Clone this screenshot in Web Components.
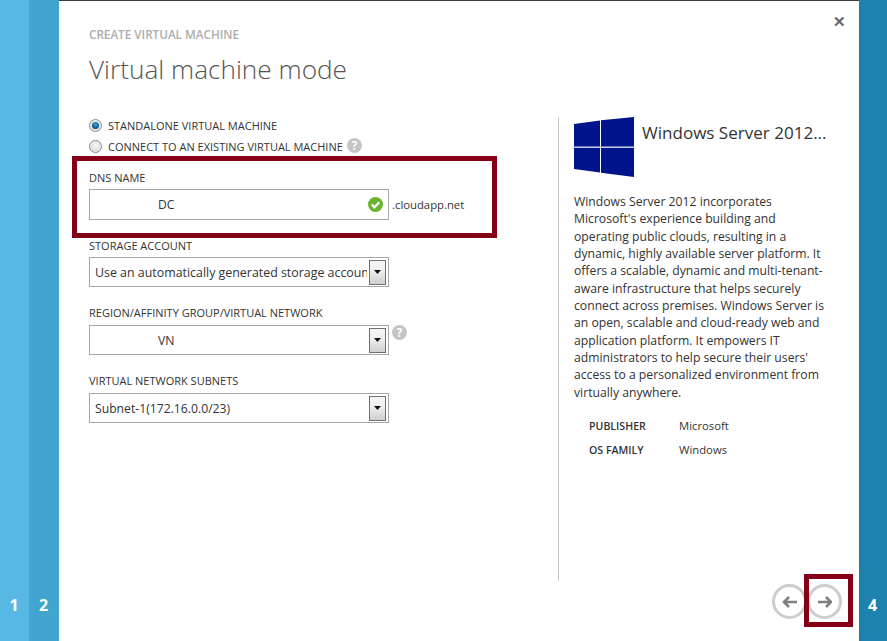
<!DOCTYPE html>
<html>
<head>
<meta charset="utf-8">
<title>Virtual machine mode</title>
<style>
  html, body { margin: 0; height: 100%; background: #fff; }
  body { font-family: "Open Sans", "Noto Sans", sans-serif; overflow: hidden; }
</style>
</head>
<body>
<wizard-shell>
  <step-rail slot="left" step="1" color="#57b8e3" width="29"></step-rail>
  <step-rail slot="left" step="2" color="#42a5d0" width="30"></step-rail>
  <step-rail slot="right" step="4" color="#1e82af" width="28"></step-rail>

  <vm-form slot="form"></vm-form>
  <image-details slot="details"></image-details>
  <wizard-nav slot="nav"></wizard-nav>
</wizard-shell>

<script>
const caps = "font-size:11px;color:#333;line-height:16px;white-space:nowrap;";
const HELP = `<svg width="15" height="15" viewBox="0 0 15 15"><circle cx="7.5" cy="7.5" r="7.5" fill="#c4c4c4"/><text x="7.5" y="11.6" text-anchor="middle" font-family="Open Sans, sans-serif" font-size="11.5" font-weight="700" fill="#fff">?</text></svg>`;

class wizardShell extends HTMLElement {
  constructor() {
    super();
    this.attachShadow({ mode: "open" });
    this.shadowRoot.innerHTML = `
    <style>
      :host { display:flex; width:887px; height:641px; position:relative; }
      .panel { flex:1; display:flex; flex-direction:column; border-top:1px solid #3a3f42; box-sizing:border-box; position:relative; }
      .head { padding:25px 0 0 30px; }
      .eyebrow { font-size:11.7px; font-weight:600; color:#adadad; line-height:16px; }
      h1 { margin:0; padding:5px 0 2px; font-size:26.2px; font-weight:300; color:#555; line-height:44px; font-family:"Open Sans","Noto Sans",sans-serif; }
      .close { position:absolute; top:12px; right:13px; font-size:15px; font-weight:700; line-height:16px; color:#666; }
      .body { display:flex; padding-top:19px; padding-left:30px; height:465px; box-sizing:border-box; }
      .form-col { width:469px; flex:none; }
      .nav { flex:1; }
      .mark { position:absolute; border:5px solid #850016; box-sizing:border-box; pointer-events:none; }
      .mark.dns { left:13px; top:155px; width:425px; height:82px; }
      .mark.next { left:745px; top:573px; width:49px; height:53px; }
    </style>
    <slot name="left"></slot>
    <main class="panel">
      <div class="close">&#10005;</div>
      <header class="head">
        <div class="eyebrow">CREATE VIRTUAL MACHINE</div>
        <h1>Virtual machine mode</h1>
      </header>
      <section class="body">
        <div class="form-col"><slot name="form"></slot></div>
        <slot name="details"></slot>
      </section>
      <div class="nav"><slot name="nav"></slot></div>
      <div class="mark dns"></div>
      <div class="mark next"></div>
    </main>
    <slot name="right"></slot>
    `;
  }
}

class stepRail extends HTMLElement {
  constructor() {
    super();
    this.attachShadow({ mode: "open" });
    const color = this.getAttribute("color");
    const width = this.getAttribute("width");
    this.shadowRoot.innerHTML = `
    <style>
      :host { display:flex; flex:none; height:100%; width:${width}px; box-sizing:border-box; padding-right:1px; background:${color}; align-items:flex-end; justify-content:center; }
      span { color:#fff; font-size:16px; font-weight:700; line-height:20px; margin-bottom:26px; }
    </style>
    <span>${this.getAttribute("step")}</span>
    `;
  }
}

class radioRow extends HTMLElement {
  constructor() {
    super();
    this.attachShadow({ mode: "open" });
    const on = this.hasAttribute("checked");
    this.shadowRoot.innerHTML = `
    <style>
      :host { display:flex; align-items:center; height:21px; gap:6px; ${caps} }
      .dot { width:13px; height:13px; border-radius:50%; box-sizing:border-box; flex:none; border:1px solid #8a8a8a;
        background:radial-gradient(circle at 50% 40%, #f8f8f8 0, #e4e4e4 50%, #c8c8c8 100%); display:flex; align-items:center; justify-content:center; box-shadow:inset 0 0 0 1px #eee; }
      .dot i { width:7px; height:7px; border-radius:50%; background:radial-gradient(circle at 50% 35%, #4ba3d8 0, #0d5f96 60%, #0a3f68 100%); }
      .help { display:flex; margin-left:-2px; margin-top:-2px; }
    </style>
    <div class="dot">${on ? "<i></i>" : ""}</div>
    <slot></slot>
    ${this.hasAttribute("help") ? `<div class="help">${HELP}</div>` : ""}
    `;
  }
}

class fieldBox extends HTMLElement {
  constructor() {
    super();
    this.attachShadow({ mode: "open" });
    const mode = this.getAttribute("mode") || "select";
    const arrow = `<div class="btn"><svg width="7" height="4" viewBox="0 0 7 4"><path d="M0 0h7L3.5 4z" fill="#111"/></svg></div>`;
    const check = `<svg class="ok" width="15" height="15" viewBox="0 0 15 15"><circle cx="7.5" cy="7.5" r="7.5" fill="#6ab42d"/><path d="M3.8 7.6l2.6 2.7 4.8-5" fill="none" stroke="#fff" stroke-width="2.2"/></svg>`;
    this.shadowRoot.innerHTML = `
    <style>
      :host { display:flex; align-items:center; }
      .box { width:300px; height:${mode === "input" ? 31 : 30}px; box-sizing:border-box; border:1px solid #a6a6a6; display:flex; align-items:center; background:#fff; position:relative; }
      .txt { flex:1; min-width:0; overflow:hidden; white-space:nowrap; font-size:var(--txt-size, 12.2px); color:#333; padding-left:5px; }
      .txt.blank { padding-left:68px; }
      .btn { flex:none; width:15px; height:23px; margin:0 2px 0 2px; border:1px solid #707070; background:linear-gradient(#f6f6f6 0, #f0f0f0 40%, #cfcfcf 100%); display:flex; align-items:flex-start; justify-content:center; }
      .btn svg { margin-top:9px; }
      .ok { flex:none; margin-right:5px; }
      .after { font-size:11.3px; color:#333; margin-left:3px; }
      .side { display:flex; align-self:flex-start; margin-left:3px; }
    </style>
    <div class="box">
      <div class="txt ${this.hasAttribute("blank") ? "blank" : ""}"><slot></slot></div>
      ${mode === "input" ? check : arrow}
    </div>
    ${this.hasAttribute("suffix") ? `<span class="after">${this.getAttribute("suffix")}</span>` : ""}
    ${this.hasAttribute("help") ? `<div class="side">${HELP}</div>` : ""}
    `;
  }
}

class vmForm extends HTMLElement {
  constructor() {
    super();
    this.attachShadow({ mode: "open" });
    this.shadowRoot.innerHTML = `
    <style>
      :host { display:block; padding-top:3px; }
      .radios { margin-bottom:13px; }
      .group { margin-bottom:18px; }
      label { display:block; ${caps} margin-bottom:3px; height:16px; }
      .low label { margin-bottom:4px; }
      .storage { --txt-size:12.4px; }
    </style>
    <div class="radios">
      <radio-row checked>STANDALONE VIRTUAL MACHINE</radio-row>
      <radio-row help>CONNECT TO AN EXISTING VIRTUAL MACHINE</radio-row>
    </div>
    <div class="group"><label>DNS NAME</label><field-box mode="input" blank suffix=".cloudapp.net">DC</field-box></div>
    <div class="group"><label>STORAGE ACCOUNT</label><field-box class="storage">Use an automatically generated storage account</field-box></div>
    <div class="group low"><label>REGION/AFFINITY GROUP/VIRTUAL NETWORK</label><field-box blank help>VN</field-box></div>
    <div class="group low"><label>VIRTUAL NETWORK SUBNETS</label><field-box>Subnet-1(172.16.0.0/23)</field-box></div>
    `;
  }
}

class imageDetails extends HTMLElement {
  constructor() {
    super();
    this.attachShadow({ mode: "open" });
    this.shadowRoot.innerHTML = `
    <style>
      :host { display:block; width:271px; flex:none; border-left:1px solid #c8c8c8; padding-left:15px; box-sizing:border-box; height:464px; margin-top:5px; }
      .top { display:flex; gap:8px; height:60px; }
      .name { font-size:17.05px; font-weight:400; color:#333; line-height:32px; white-space:nowrap; }
      svg { display:block; flex:none; }
      p { margin:16px 0 0; font-size:12.2px; line-height:17.35px; color:#333; white-space:nowrap; }
      dl { margin:17px 0 0 15px; display:grid; grid-template-columns:90px 1fr; row-gap:8px; font-size:11.3px; line-height:16px; color:#333; }
      dt { font-size:10.6px; font-weight:600; }
      dd { margin:0; }
    </style>
    <div class="top">
      <svg width="60" height="60" viewBox="0 0 60 60">
        <rect x="0" y="29.5" width="60" height="1.5" fill="#bfc5e2"/>
        <g fill="#00148c">
          <polygon points="0,7 26,3.4 26,29.5 0,29.5"/>
          <polygon points="27,3.2 60,0 60,29.5 27,29.5"/>
          <polygon points="0,31 26,31 26,55.5 0,52"/>
          <polygon points="27,31 60,31 60,60 27,55.7"/>
        </g>
      </svg>
      <div class="name">Windows Server 2012...</div>
    </div>
    <p>Windows Server 2012 incorporates<br>Microsoft's experience building and<br>operating public clouds, resulting in a<br>dynamic, highly available server platform. It<br>offers a scalable, dynamic and multi-tenant-<br>aware infrastructure that helps securely<br>connect across premises. Windows Server is<br>an open, scalable and cloud-ready web and<br>application platform. It empowers IT<br>administrators to help secure their users'<br>access to a personalized environment from<br>virtually anywhere.</p>
    <dl>
      <dt>PUBLISHER</dt><dd>Microsoft</dd>
      <dt>OS FAMILY</dt><dd>Windows</dd>
    </dl>
    `;
  }
}

class wizardNav extends HTMLElement {
  constructor() {
    super();
    this.attachShadow({ mode: "open" });
    const btn = d => `<div class="circle"><svg width="15" height="12" viewBox="0 0 15 12"><path d="${d}" fill="none" stroke="#7f7f7f" stroke-width="2.6"/></svg></div>`;
    this.shadowRoot.innerHTML = `
    <style>
      :host { display:flex; justify-content:flex-end; padding:26px 17px 0 0; }
      .circle { width:35px; height:35px; border:3px solid #cdcdcd; border-radius:50%; box-sizing:border-box; display:flex; align-items:center; justify-content:center; background:#fff; }
    </style>
    ${btn("M15 6H2M7 1L2 6l5 5")}
    ${btn("M1 6h13M9 1l5 5-5 5")}
    `;
  }
}

customElements.define("radio-row", radioRow);
customElements.define("field-box", fieldBox);
customElements.define("vm-form", vmForm);
customElements.define("image-details", imageDetails);
customElements.define("wizard-nav", wizardNav);
customElements.define("step-rail", stepRail);
customElements.define("wizard-shell", wizardShell);
</script>
</body>
</html>
